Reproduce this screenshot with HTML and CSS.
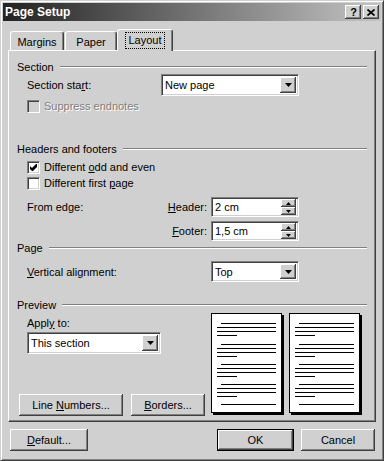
FILE: index.html
```html
<!DOCTYPE html>
<html lang="en">
  <head>
    <meta charset="UTF-8" />
    <title>Page Setup</title>
    <link rel="stylesheet" href="styles.css">
  </head>
  <body>
    <div class="window">
      <div class="titlebar">
        <span class="title">Page Setup</span>
        <div class="caption-buttons">
          <span class="cap-btn help">?</span>
          <span class="cap-btn">
            <svg width="8" height="7" viewBox="0 0 8 7"><path d="M0.5 0.5 L7.5 6.5 M7.5 0.5 L0.5 6.5" stroke="#000" stroke-width="1.7" /></svg>
          </span>
        </div>
      </div>

      <div class="dialog">
        <div class="tabs">
          <div class="tab tab-margins">Margins</div>
          <div class="tab tab-paper">Paper</div>
          <div class="tab tab-layout active"><span class="focus">Layout</span></div>
        </div>

        <div class="panel">
          <!-- Section -->
          <div class="group-title">Section</div>
          <div class="row row-select">
            <span>Section sta<u>r</u>t:</span>
            <div class="combo combo-start">
              <span class="value">New page</span>
              <span class="drop"><svg width="7" height="4" viewBox="0 0 7 4"><path d="M0 0 H7 L3.5 4 Z" fill="#000" /></svg></span>
            </div>
          </div>
          <div class="row row-check row-suppress disabled">
            <span class="check"></span>
            <span>Suppress endnotes</span>
          </div>

          <!-- Headers and footers -->
          <div class="group-title group-headers">Headers and footers</div>
          <div class="row row-check row-odd">
            <span class="check">
              <svg width="7" height="7" viewBox="0 0 7 7"><path d="M0 2 L2 4 L6 0 L7 0 L7 3 L3 7 L2 7 L0 5 Z" fill="#000" /></svg>
            </span>
            <span>Different <u>o</u>dd and even</span>
          </div>
          <div class="row row-check row-first">
            <span class="check"></span>
            <span>Different first <u>p</u>age</span>
          </div>
          <div class="row row-spin row-header">
            <span>From edge:</span>
            <span class="spin-label"><u>H</u>eader:</span>
            <div class="spin">
              <span class="value">2 cm</span>
              <span class="arrows">
                <span class="arr"><svg width="5" height="3" viewBox="0 0 5 3"><path d="M2.5 0 L5 3 H0 Z" fill="#000" /></svg></span>
                <span class="arr"><svg width="5" height="3" viewBox="0 0 5 3"><path d="M0 0 H5 L2.5 3 Z" fill="#000" /></svg></span>
              </span>
            </div>
          </div>
          <div class="row row-spin row-footer">
            <span class="spin-label"><u>F</u>ooter:</span>
            <div class="spin">
              <span class="value">1,5 cm</span>
              <span class="arrows">
                <span class="arr"><svg width="5" height="3" viewBox="0 0 5 3"><path d="M2.5 0 L5 3 H0 Z" fill="#000" /></svg></span>
                <span class="arr"><svg width="5" height="3" viewBox="0 0 5 3"><path d="M0 0 H5 L2.5 3 Z" fill="#000" /></svg></span>
              </span>
            </div>
          </div>

          <!-- Page -->
          <div class="group-title">Page</div>
          <div class="row row-valign">
            <span><u>V</u>ertical alignment:</span>
            <div class="combo combo-top">
              <span class="value">Top</span>
              <span class="drop"><svg width="7" height="4" viewBox="0 0 7 4"><path d="M0 0 H7 L3.5 4 Z" fill="#000" /></svg></span>
            </div>
          </div>

          <!-- Preview -->
          <div class="group-title group-preview">Preview</div>
          <div class="preview">
            <div class="preview-left">
              <div class="row row-apply"><span>Appl<u>y</u> to:</span></div>
              <div class="combo combo-apply">
                <span class="value">This section</span>
                <span class="drop"><svg width="7" height="4" viewBox="0 0 7 4"><path d="M0 0 H7 L3.5 4 Z" fill="#000" /></svg></span>
              </div>
              <div class="preview-buttons">
                <span class="btn btn-lines"><span>Line <u>N</u>umbers...</span></span>
                <span class="btn btn-borders"><span><u>B</u>orders...</span></span>
              </div>
            </div>
            <div class="pages">
              <div class="page">
                <svg width="71" height="100" viewBox="0 0 71 100">
                  <g stroke="#000" stroke-width="1">
                    <path d="M10 10.5 H65 M6 14.5 H65 M6 18.5 H65 M6 22.5 H26" />
                    <path d="M10 31.5 H65 M6 35.5 H65 M6 39.5 H65 M6 43.5 H26" />
                    <path d="M10 51.5 H65 M6 55.5 H65 M6 59.5 H65 M6 63.5 H26" />
                    <path d="M10 71.5 H65 M6 75.5 H65 M6 79.5 H65 M6 83.5 H26" />
                    <path d="M10 91.5 H65" />
                  </g>
                </svg>
              </div>
              <div class="page">
                <svg width="71" height="100" viewBox="0 0 71 100">
                  <g stroke="#000" stroke-width="1">
                    <path d="M10 10.5 H65 M6 14.5 H65 M6 18.5 H65 M6 22.5 H26" />
                    <path d="M10 31.5 H65 M6 35.5 H65 M6 39.5 H65 M6 43.5 H26" />
                    <path d="M10 51.5 H65 M6 55.5 H65 M6 59.5 H65 M6 63.5 H26" />
                    <path d="M10 71.5 H65 M6 75.5 H65 M6 79.5 H65 M6 83.5 H26" />
                    <path d="M10 91.5 H65" />
                  </g>
                </svg>
              </div>
            </div>
          </div>
        </div>

        <div class="footer">
          <span class="btn btn-default"><span><u>D</u>efault...</span></span>
          <span class="btn btn-ok">OK</span>
          <span class="btn btn-cancel">Cancel</span>
        </div>
      </div>
    </div>
  </body>
</html>
```

FILE: styles.css
```css
body {
  margin: 0;
  background: #d0d0d0;
  font-family: "Liberation Sans", Arial, sans-serif;
  font-size: 11px;
  color: #000;
}

u {
  text-underline-offset: 1px;
}

.window {
  width: 384px;
  height: 461px;
  box-sizing: border-box;
  border: 1px solid;
  border-color: #d0d0d0 #404040 #404040 #d0d0d0;
  box-shadow: inset 1px 1px #fff, inset -1px -1px #808080;
  padding: 2px;
  background: #d0d0d0;
}

/* title bar */
.titlebar {
  height: 18px;
  display: flex;
  align-items: center;
  background: linear-gradient(to right, #222, #c4c4c4);
  padding: 0 2px 0 2px;
}

.title {
  flex: 1;
  color: #fff;
  font-weight: bold;
  font-size: 12px;
}

.caption-buttons {
  display: flex;
  gap: 2px;
}

.cap-btn {
  width: 16px;
  height: 14px;
  box-sizing: border-box;
  display: flex;
  align-items: center;
  justify-content: center;
  background: #d0d0d0;
  box-shadow: inset -1px -1px #404040, inset 1px 1px #fff, inset -2px -2px #808080;
}

.cap-btn.help {
  font-weight: bold;
  font-size: 11px;
  padding-left: 1px;
}

/* dialog body */
.dialog {
  padding: 0 5px;
}

.tabs {
  display: flex;
  align-items: flex-end;
  height: 21px;
  margin-top: 8px;
  padding-left: 2px;
}

.tab {
  height: 19px;
  box-sizing: border-box;
  display: flex;
  justify-content: center;
  align-items: center;
  padding-top: 2px;
  border-top: 1px solid #fff;
  border-left: 1px solid #fff;
  border-right: 1px solid #404040;
  box-shadow: inset -1px 0 #808080;
  border-radius: 3px 3px 0 0;
  background: #d0d0d0;
}

.tab-margins {
  width: 54px;
}

.tab-paper {
  width: 52px;
  margin-left: 1px;
}

.tab-layout {
  width: 56px;
}

.tab.active {
  height: 22px;
  margin-bottom: -1px;
  padding-top: 0;
  position: relative;
  z-index: 1;
}

.focus {
  outline: 1px dotted #000;
  padding: 1px 2px 2px;
}

.panel {
  width: 368px;
  height: 372px;
  box-sizing: border-box;
  border-top: 1px solid #fff;
  border-left: 1px solid #fff;
  border-right: 1px solid #404040;
  border-bottom: 1px solid #404040;
  box-shadow: inset -1px -1px #808080;
  padding: 9px 8px 0 8px;
}

.group-title {
  height: 14px;
  display: flex;
  align-items: center;
  gap: 6px;
}

.group-title::after {
  content: "";
  flex: 1;
  border-top: 1px solid #808080;
  border-bottom: 1px solid #fff;
}

.group-headers {
  margin-top: 29px;
}

.group-preview {
  margin-top: 16px;
}

.row {
  display: flex;
  align-items: center;
  padding-left: 10px;
  width: 272px;
}

.row-select {
  height: 22px;
  justify-content: space-between;
}

.row-check {
  height: 14px;
  gap: 4px;
}

.row-suppress {
  margin-top: 3px;
}

.row-odd {
  margin-top: 4px;
}

.row-first {
  margin-top: 2px;
}

.disabled {
  color: #808080;
  text-shadow: 1px 1px #fff;
}

.check {
  width: 13px;
  height: 13px;
  box-sizing: border-box;
  display: flex;
  align-items: center;
  justify-content: center;
  border: 1px solid;
  border-color: #808080 #fff #fff #808080;
  box-shadow: inset 1px 1px #404040, inset -1px -1px #d0d0d0;
  background: #fff;
}

.disabled .check {
  background: #d0d0d0;
}

.row-spin {
  height: 20px;
}

.row-header {
  margin-top: 7px;
}

.row-footer {
  margin-top: 4px;
}

.spin-label {
  margin-left: auto;
  margin-right: 4px;
}

.spin,
.combo {
  height: 20px;
  box-sizing: border-box;
  display: flex;
  align-items: stretch;
  border: 1px solid;
  border-color: #808080 #fff #fff #808080;
  box-shadow: inset 1px 1px #404040, inset -1px -1px #d0d0d0;
  background: #fff;
  padding: 2px;
}

.spin {
  width: 88px;
}

.value {
  flex: 1;
  display: flex;
  align-items: center;
  padding-left: 1px;
}

.arrows {
  width: 15px;
  display: flex;
  flex-direction: column;
  margin: -1px 0;
}

.arr,
.drop {
  flex: 1;
  display: flex;
  align-items: center;
  justify-content: center;
  background: #d0d0d0;
  box-shadow: inset -1px -1px #404040, inset 1px 1px #fff, inset -2px -2px #808080;
}

.drop {
  flex: none;
  width: 16px;
}

.combo {
  height: 22px;
}

.combo-start {
  width: 138px;
}

.row-valign {
  height: 21px;
  margin-top: 6px;
}

.combo-top {
  width: 88px;
  height: 21px;
  margin-left: auto;
}

/* preview */
.preview {
  display: flex;
  height: 104px;
}

.preview-left {
  width: 194px;
  display: flex;
  flex-direction: column;
}

.row-apply {
  height: 14px;
  margin-top: 4px;
}

.combo-apply {
  width: 134px;
  margin: 2px 0 0 10px;
}

.preview-buttons {
  display: flex;
  gap: 8px;
  margin-top: auto;
  padding-left: 2px;
}

.pages {
  display: flex;
  gap: 7px;
  margin-top: 1px;
}

.page {
  width: 71px;
  height: 100px;
  box-sizing: border-box;
  border: 1px solid #000;
  background: #fff;
  box-shadow: 2px 2px 0 #000;
}

.page svg {
  display: block;
  margin: -1px;
}

/* buttons */
.btn {
  height: 22px;
  box-sizing: border-box;
  display: flex;
  align-items: center;
  justify-content: center;
  background: #d0d0d0;
  box-shadow: inset -1px -1px #404040, inset 1px 1px #fff, inset -2px -2px #808080;
}

.btn-lines {
  width: 104px;
}

.btn-borders {
  width: 74px;
}

.footer {
  display: flex;
  margin-top: 7px;
  padding: 0 1px 0 2px;
}

.btn-default {
  width: 78px;
}

.btn-ok {
  width: 77px;
  margin-left: auto;
  border: 1px solid #000;
}

.btn-cancel {
  width: 74px;
  margin-left: 7px;
}
```
